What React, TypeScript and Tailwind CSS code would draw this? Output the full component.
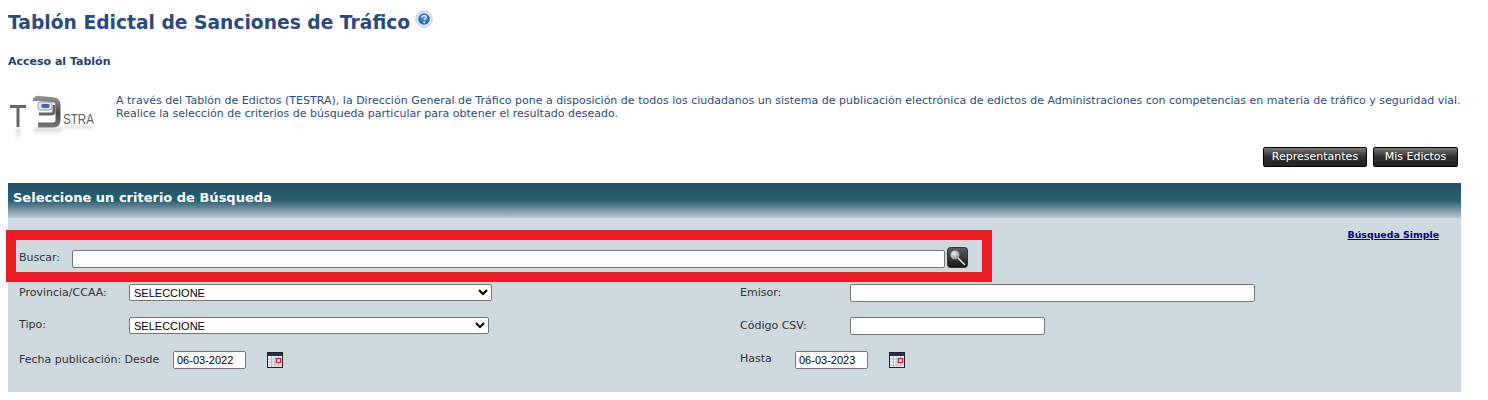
const sans = "font-['DejaVu_Sans',Verdana,sans-serif]";

function HelpIcon() {
  return (
    <svg width="18" height="18" viewBox="0 0 18 18" className="ml-[5px] shrink-0">
      <defs>
        <radialGradient id="hb" cx="50%" cy="40%" r="60%">
          <stop offset="0%" stopColor="#5a9be0" />
          <stop offset="100%" stopColor="#1c5aa8" />
        </radialGradient>
      </defs>
      <circle cx="9" cy="9" r="8.2" fill="#dfe8ef" stroke="#b5c4cf" strokeWidth="0.8" />
      <circle cx="9" cy="9" r="5.8" fill="url(#hb)" />
      <path d="M7 7.4c0-1.2 1-1.8 2.1-1.8 1.2 0 2 .7 2 1.7 0 1.4-1.8 1.4-1.8 2.8" fill="none" stroke="#fff" strokeWidth="1.3" />
      <circle cx="9.2" cy="12.3" r=".9" fill="#fff" />
    </svg>
  );
}

function Logo() {
  return (
    <svg width="96" height="68" viewBox="0 0 96 68" className="shrink-0">
      <defs>
        <linearGradient id="fade" x1="0" y1="0" x2="0" y2="1">
          <stop offset="0%" stopColor="#9a9a9a" />
          <stop offset="100%" stopColor="#ffffff" stopOpacity="0" />
        </linearGradient>
        <linearGradient id="body" x1="0" y1="0" x2="0" y2="1">
          <stop offset="0%" stopColor="#8c8c8c" />
          <stop offset="55%" stopColor="#4a4a4a" />
          <stop offset="100%" stopColor="#707070" />
        </linearGradient>
        <filter id="soft"><feGaussianBlur stdDeviation="0.4" /></filter>
        <filter id="softer"><feGaussianBlur stdDeviation="1.5" /></filter>
      </defs>
      <g filter="url(#soft)">
        <path d="M2 22H18V25H11.5V44H8.5V25H2Z" fill="#666666" />
        <path d="M27 18C27 16 29 15 32 15.5L46 17C49 17.5 50 19 50 22V37C50 40 48.5 42 45 42H30" fill="none" stroke="url(#body)" strokeWidth="5" />
        <path d="M31 31H43C45 31 46 30 46 28V22" fill="none" stroke="#666666" strokeWidth="3" />
        <rect x="30" y="19" width="14" height="8" rx="2" fill="#e3e6ea" stroke="#9a9a9a" strokeWidth="1" />
        <rect x="33.5" y="21" width="8" height="4" rx="1" fill="#3f68b5" />
      </g>
      <g filter="url(#softer)" opacity=".55">
        <rect x="8" y="46" width="4" height="16" fill="url(#fade)" />
        <rect x="26" y="45" width="28" height="9" fill="url(#fade)" />
        <rect x="55" y="43" width="30" height="5" fill="url(#fade)" />
      </g>
      <text x="55" y="41" fontSize="15" fill="#5f5f5f" fontFamily="'Liberation Sans',sans-serif" textLength="31" lengthAdjust="spacingAndGlyphs">STRA</text>
    </svg>
  );
}

function DarkButton({ label, w }: { label: string; w: string }) {
  return (
    <button className={`${w} h-[20px] rounded-[2px] border border-black bg-gradient-to-b from-[#7a7a7a] via-[#303030] to-[#242424] text-[11px] leading-[16px] text-white`}>
      {label}
    </button>
  );
}

function SearchIcon() {
  return (
    <svg width="21" height="21" viewBox="0 0 21 21" className="shrink-0">
      <defs>
        <linearGradient id="sb" x1="0" y1="0" x2="0" y2="1">
          <stop offset="0%" stopColor="#606060" />
          <stop offset="100%" stopColor="#151515" />
        </linearGradient>
        <radialGradient id="lens" cx="40%" cy="35%" r="65%">
          <stop offset="0%" stopColor="#eeeeee" />
          <stop offset="100%" stopColor="#8f8f8f" />
        </radialGradient>
      </defs>
      <rect x=".5" y=".5" width="20" height="20" rx="3" fill="url(#sb)" stroke="#333" />
      <path d="M10.5 10.5L17.5 17.5" stroke="#e8e8e8" strokeWidth="1.5" strokeLinecap="round" />
      <circle cx="8" cy="8" r="4.6" fill="url(#lens)" />
    </svg>
  );
}

function CalendarIcon() {
  return (
    <svg width="16" height="16" viewBox="0 0 16 16" className="shrink-0">
      <rect x=".5" y=".5" width="15" height="15" fill="#f4f4f4" stroke="#222" />
      <rect x="1" y="1" width="14" height="3" fill="#1d2f6b" />
      <path d="M4.5 4v11M8 4v11M11.5 4v11M1 7h14M1 10h14M1 13h14" stroke="#bdbdbd" strokeWidth="1" />
      <rect x="9.5" y="6.5" width="4" height="4" fill="#fff" stroke="#c8102e" strokeWidth="1.2" />
    </svg>
  );
}

const fieldCls =
  "block rounded-[2px] border border-[#767676] bg-white font-['Liberation_Sans',Arial,sans-serif] text-[11px] text-black outline-none";

function Select({ w }: { w: string }) {
  return (
    <select className={`${w} h-[17px] ${fieldCls} appearance-auto`} defaultValue="s">
      <option value="s">SELECCIONE</option>
    </select>
  );
}

function Input({ w, h, value }: { w: string; h: string; value?: string }) {
  return <input className={`${w} ${h} ${fieldCls} px-[3px]`} defaultValue={value ?? ""} />;
}

export default function App() {
  return (
    <div className={`relative h-[400px] w-[1488px] overflow-hidden bg-white ${sans} text-[11px] text-[#333]`}>
      <div className="flex h-[45px] items-start pl-[8px] pt-[10px]">
        <h1 className="pt-[1px] text-[18.7px] font-bold leading-[24px] text-[#2c4a7c]">Tablón Edictal de Sanciones de Tráfico</h1>
        <HelpIcon />
      </div>

      <h2 className="pl-[8px] pt-[10px] text-[11px] font-bold leading-[14px] text-[#26406e]">Acceso al Tablón</h2>

      <div className="flex h-[78px] pl-[8px] pt-[14px]">
        <Logo />
        <p className="ml-[12px] pt-[11px] text-[11.02px] leading-[13px] text-[#2c4a7c] whitespace-nowrap">
          A través del Tablón de Edictos (TESTRA), la Dirección General de Tráfico pone a disposición de todos los ciudadanos un sistema de publicación electrónica de edictos de Administraciones con competencias en materia de tráfico y seguridad vial.
          <br />
          Realice la selección de criterios de búsqueda particular para obtener el resultado deseado.
        </p>
      </div>

      <div className="flex w-[1458px] justify-end gap-[6px]">
        <DarkButton label="Representantes" w="w-[104px]" />
        <DarkButton label="Mis Edictos" w="w-[85px]" />
      </div>

      <section className="ml-[8px] mt-[16px] h-[209px] w-[1453px] bg-[#cdd8df]">
        <div className="flex h-[35px] items-start bg-gradient-to-b from-[#1c5268] via-[#2b5f74] via-50% to-[#b9c7cf] pl-[5px] pt-[7px]">
          <span className="text-[13px] font-bold leading-[16px] text-white">Seleccione un criterio de Búsqueda</span>
        </div>

        <div className="flex h-[15px] justify-end pr-[22px] pt-[10px]">
          <a href="#" className="text-[9.4px] font-bold leading-[14px] text-[#000080] underline">Búsqueda Simple</a>
        </div>

        <div className="mt-[14px] flex h-[20px] items-start pl-[11px]">
          <span className="w-[53px] pt-[4px] leading-[14px]">Buscar:</span>
          <span className="pt-[3px]"><Input w="w-[873px]" h="h-[18px]" /></span>
          <span className="ml-[2px]"><SearchIcon /></span>
        </div>

        <div className="mt-[17px] flex h-[17px] items-start pl-[11px]">
          <div className="flex w-[721px]">
            <span className="w-[110px] pt-[2px] leading-[14px]">Provincia/CCAA:</span>
            <Select w="w-[363px]" />
          </div>
          <span className="w-[110px] pt-[2px] leading-[14px]">Emisor:</span>
          <Input w="w-[405px]" h="h-[18px]" />
        </div>

        <div className="mt-[16px] flex h-[18px] items-start pl-[11px]">
          <div className="flex w-[721px]">
            <span className="w-[110px] pt-[1px] leading-[14px]">Tipo:</span>
            <Select w="w-[360px]" />
          </div>
          <span className="w-[110px] pt-[2px] leading-[14px]">Código CSV:</span>
          <Input w="w-[195px]" h="h-[18px]" />
        </div>

        <div className="mt-[16px] flex h-[18px] items-start pl-[11px]">
          <div className="flex w-[721px]">
            <span className="w-[154px] pt-[2px] leading-[14px]">Fecha publicación: Desde</span>
            <Input w="w-[73px]" h="h-[18px]" value="06-03-2022" />
            <span className="ml-[21px] mt-[1px]"><CalendarIcon /></span>
          </div>
          <span className="w-[55px] pt-[1px] leading-[14px]">Hasta</span>
          <Input w="w-[73px]" h="h-[18px]" value="06-03-2023" />
          <span className="ml-[21px] mt-[1px]"><CalendarIcon /></span>
        </div>
      </section>

      <div className="pointer-events-none absolute left-[6px] top-[230px] h-[52px] w-[986px] border-[10px] border-[#ed1c24]" />
    </div>
  );
}
